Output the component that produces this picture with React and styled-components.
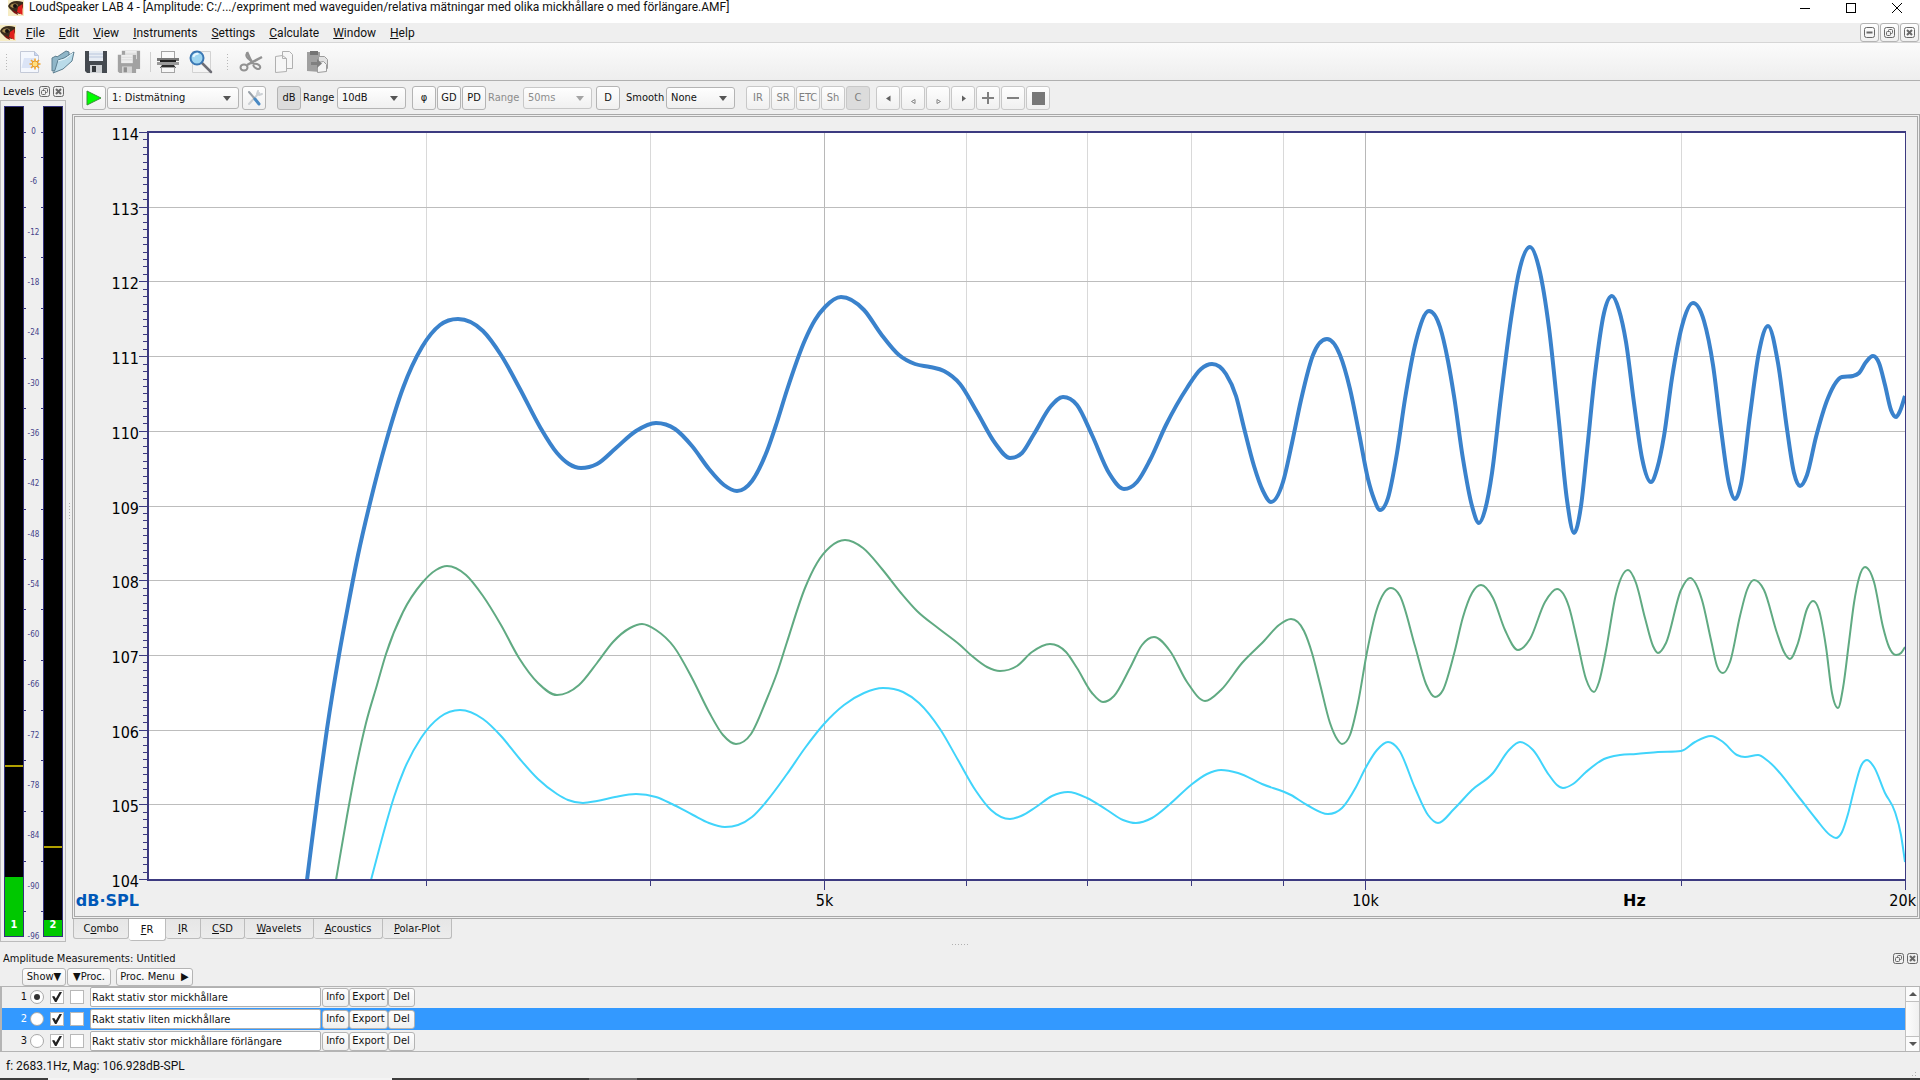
import React, { useLayoutEffect, useRef, useState } from "react";
import styled, { createGlobalStyle, css } from "styled-components";

const uiFont = '"DejaVu Sans Condensed", "DejaVu Sans", sans-serif';
const systemFont = 'Roboto, "Noto Sans", sans-serif';
const axis = "#3c3a80";

const GlobalStyle = createGlobalStyle`
  *, *::before, *::after { box-sizing: border-box; }
  body { margin: 0; background: #efefef; color: #111; font: 11px/14px ${uiFont}; overflow: hidden; }
  button, input, select { margin: 0; font: inherit; color: inherit; }
`;

/* ---------- shared parts ---------- */

const Window = styled.div`
  display: flex;
  flex-direction: column;
  height: 100vh;
  min-height: 600px;
`;

const raised = css`
  border: 1px solid #b4b4b4;
  border-radius: 3px;
  background: linear-gradient(#fefefe, #f0f0f0);
`;

const PushButton = styled.button`
  ${raised}
  display: flex;
  align-items: center;
  justify-content: center;
  flex: none;
  height: ${(p) => p.$height || 24}px;
  width: ${(p) => (p.$width ? `${p.$width}px` : "auto")};
  padding: 0;
  white-space: nowrap;
  ${(p) => p.$pressed && css`background: #dcdcdc;`}
  &:disabled { color: #808080; border-color: #c8c8c8; }
`;

const FlatButton = styled.button`
  display: flex;
  align-items: center;
  justify-content: center;
  flex: none;
  width: ${(p) => p.$width}px;
  height: ${(p) => p.$height}px;
  padding: 0;
  border: 0;
  background: none;
`;

const FrameGlyph = ({ kind, size = 11 }) => (
  <svg width={size} height={size} viewBox="0 0 11 11" fill="none" stroke="#686868">
    <rect x="0.5" y="0.5" width="10" height="10" rx="2" />
    {kind === "min" && <path d="M2.5 5.5h6" strokeWidth="2" />}
    {kind === "float" && (
      <>
        <rect x="4.5" y="2.5" width="4" height="4" rx="1" />
        <rect x="2.5" y="4.5" width="4" height="4" rx="1" fill="#efefef" />
      </>
    )}
    {kind === "close" && <path d="M3 3l5 5M8 3l-5 5" strokeWidth="2" />}
  </svg>
);

/* ---------- title bar and menu ---------- */

const TitleBar = styled.header`
  display: flex;
  align-items: center;
  flex: none;
  height: 23px;
  padding: 0 0 8px 8px;
  gap: 5px;
  background: #fff;
  font: 12px/15px ${systemFont};
`;

const Title = styled.span`
  flex: 1;
  white-space: nowrap;
`;

const WindowButtons = styled.div`
  display: flex;
`;

const MenuBar = styled.nav`
  display: flex;
  align-items: center;
  flex: none;
  height: 20px;
  font: 12px/18px ${systemFont};
  border-bottom: 1px solid #d6d6d6;
`;

const MenuItems = styled.div`
  display: flex;
  flex: 1;
  padding-left: 3px;
`;

const MenuItem = styled.button`
  padding: 0 7px;
  border: 0;
  background: none;
  line-height: 18px;
`;

const MdiButtons = styled.div`
  display: flex;
  gap: 1px;
  padding-right: 1px;
`;

const AppIcon = () => (
  <svg width="16" height="16" viewBox="0 0 16 16" aria-hidden="true">
    <rect width="16" height="16" fill="#f6ecc4" />
    <path d="M0 6C2 1 8 0 15 2L15 7L12 14L5 12L1 8Z" fill="#3a2c1c" />
    <path d="M2 6C4 3 8 3 10 5C8 8 4 9 2 6Z" fill="#a88c50" />
    <circle cx="7" cy="6" r="2" fill="#141010" />
    <path d="M10 7L14.5 4V15L9 12Z" fill="#e0201c" />
    <path d="M4 10L9 12L10 15L6 13Z" fill="#7c1410" />
  </svg>
);

const menus = ["File", "Edit", "View", "Instruments", "Settings", "Calculate", "Window", "Help"];

/* ---------- main toolbar ---------- */

const ToolBar = styled.div`
  display: flex;
  align-items: center;
  flex: none;
  height: 38px;
  gap: 9px;
  padding-left: 5px;
  background: linear-gradient(#fbfbfb, #eeeeee);
  border-bottom: 1px solid #b0b0b0;
`;

const Grip = styled.span`
  width: 4px;
  height: 18px;
  background: radial-gradient(circle, #b8b8b8 1px, transparent 1px) 0 0 / 3px 3px;
`;

const Separator = styled.span`
  width: 1px;
  height: 20px;
  margin-right: -4px;
  background: #cfcfcf;
`;

const ToolGroup = styled.div`
  display: flex;
  align-items: center;
  gap: 9px;
  margin-right: 4px;
`;

const NewIcon = () => (
  <svg width="24" height="24" viewBox="0 0 24 24">
    <path d="M2.5 1.5h14l4 4v17h-18z" fill="#f4f7fd" stroke="#c4cad8" />
    <path d="M6 8h10v10H3.5z" fill="#dbe4f6" />
    <path d="M16.5 1.5v4h4" fill="#c9d6f0" stroke="#b8c2d8" />
    <path d="M17 8.5v11M11.5 14h11M13 10l8 8M21 10l-8 8" stroke="#f0a530" strokeWidth="1.6" />
    <circle cx="17" cy="14" r="3" fill="#ffdf80" stroke="#e89a28" />
  </svg>
);
const OpenIcon = () => (
  <svg width="24" height="24" viewBox="0 0 24 24" stroke="#5d7f90" strokeLinejoin="round">
    <path d="M1 8l4-2 1 1 9-6 3 1v4L6 20l-5 1z" fill="#8fb6c8" />
    <path d="M4 20L7 10l6-2L23 2l-2 9-9 8-10 4z" fill="#b9dbe9" />
    <path d="M7 11l7-2 8-6" fill="none" stroke="#e9f6fb" />
  </svg>
);
const Floppy = ({ x = 0, y = 0, s = 1, dark }) => (
  <g transform={`translate(${x} ${y}) scale(${s})`}>
    <path d="M1 1h22v22H3l-2-2z" fill={dark ? "#454a50" : "#a2a2a2"} />
    <rect x="5" y="1" width="14" height="10" fill={dark ? "#e8edf4" : "#eeeeee"} />
    <path d="M5 4h14M5 7h14" stroke={dark ? "#b9c6dc" : "#d8d8d8"} />
    <rect x="6" y="15" width="12" height="8" fill={dark ? "#cfd2d5" : "#d4d4d4"} />
    <rect x="8" y="16" width="4" height="6" fill={dark ? "#33373b" : "#8e8e8e"} />
  </g>
);
const SaveIcon = () => <svg width="24" height="24" viewBox="0 0 24 24"><Floppy dark /></svg>;
const SaveAllIcon = () => (
  <svg width="24" height="24" viewBox="0 0 24 24">
    <Floppy x={4} y={0} s={0.83} />
    <Floppy x={0} y={4} s={0.83} />
  </svg>
);
const PrintIcon = () => (
  <svg width="24" height="24" viewBox="0 0 24 24">
    <rect x="5.5" y="1.5" width="13" height="8" fill="#fafafa" stroke="#a4a4a4" />
    <rect x="1" y="8" width="22" height="3" fill="#777" />
    <rect x="4" y="10" width="16" height="3" fill="#202020" />
    <rect x="1" y="12" width="22" height="3" fill="#9a9a9a" />
    <path d="M4 18l2-3h12l2 3z" fill="#2c2c2c" />
    <rect x="5.5" y="17.5" width="13" height="5" fill="#f6f6f6" stroke="#a4a4a4" />
  </svg>
);
const PreviewIcon = () => (
  <svg width="24" height="24" viewBox="0 0 24 24">
    <path d="M3.5 1.5h18v21h-18z" fill="#f4f4f4" stroke="#d2d2d2" />
    <path d="M13 13l9 9" stroke="#6e6e76" strokeWidth="2.5" strokeLinecap="round" />
    <circle cx="8" cy="8" r="6.5" fill="#9fd6f2" stroke="#3a77b4" strokeWidth="2" />
    <path d="M4.5 7a4 4 0 0 1 5-3" stroke="#e6f7ff" strokeWidth="2" fill="none" />
  </svg>
);
const CutIcon = () => (
  <svg width="24" height="24" viewBox="0 0 24 24" fill="none" stroke="#929292">
    <path d="M8 2c2 5 4 9 6 12M23 7L8 15" strokeWidth="2.5" />
    <path d="M8 3c-2 3 1 6 4 8" strokeWidth="2" />
    <ellipse cx="5" cy="17.5" rx="3.5" ry="3" strokeWidth="2" />
    <path d="M14 14c5-1 8 2 7 4s-5 1-7-3" strokeWidth="2" />
  </svg>
);
const CopyIcon = () => (
  <svg width="24" height="24" viewBox="0 0 24 24" fill="#f6f6f6" stroke="#b0b0b0">
    <path d="M10.5 1.5h7l3 3v14h-10z" />
    <path d="M3.5 6.5l7-1 4 3v13l-11 1z" />
    <path d="M10.5 5.5v3h4" fill="none" />
  </svg>
);
const PasteIcon = () => (
  <svg width="24" height="24" viewBox="0 0 24 24">
    <path d="M2 2h13v20l-13-1z" fill="#a0a0a0" />
    <rect x="5" y="1" width="8" height="4" fill="#747474" />
    <path d="M13.5 6.5h6l3 3v9h-9z" fill="#e2e2e2" stroke="#9c9c9c" />
    <path d="M12.5 12.5l6-1 3 3v7l-9 1z" fill="#f5f5f5" stroke="#9c9c9c" />
    <path d="M6 12h6v-3l5 4.5-5 4.5v-3H6z" fill="#808080" />
  </svg>
);

const fileTools = [["New", NewIcon], ["Open", OpenIcon], ["Save", SaveIcon], ["Save all", SaveAllIcon]];
const printTools = [["Print", PrintIcon], ["Print preview", PreviewIcon]];
const editTools = [["Cut", CutIcon], ["Copy", CopyIcon], ["Paste", PasteIcon]];

const Tools = ({ items }) =>
  items.map(([label, Icon]) => (
    <FlatButton key={label} $width={24} $height={24} aria-label={label}>
      <Icon />
    </FlatButton>
  ));

/* ---------- level meters ---------- */

const Workspace = styled.div`
  display: flex;
  flex: 1;
  min-height: 0;
`;

const LevelsDock = styled.aside`
  display: flex;
  flex-direction: column;
  width: 66px;
`;

const DockTitle = styled.div`
  display: flex;
  align-items: center;
  gap: 3px;
  flex: none;
  height: ${(p) => p.$height}px;
  padding: 2px 2px 0 3px;
`;

const DockName = styled.span`
  flex: 1;
  white-space: nowrap;
`;

const LevelsFrame = styled.div`
  display: flex;
  flex: 1;
  min-height: 0;
  padding: 5px 2px 4px 3px;
  border: 1px solid #bcbcbc;
`;

const Meter = styled.div`
  position: relative;
  display: flex;
  flex-direction: column;
  justify-content: flex-end;
  width: 20px;
  background: #000;
  border: 1px solid #34327c;
`;

const MeterFill = styled.div`
  background: #00c800;
`;

const PeakLine = styled.div`
  position: absolute;
  left: 0;
  right: 0;
  height: 2px;
  background: #b0a000;
`;

const MeterNumber = styled.span`
  position: absolute;
  left: 0;
  right: 0;
  bottom: 4px;
  text-align: center;
  font-weight: bold;
  color: #fff;
`;

const Scale = styled.div`
  display: flex;
  flex-direction: column;
  justify-content: space-between;
  width: 19px;
  padding: 26px 0 0;
  font-size: 8px;
  line-height: 10px;
  color: #45438a;
`;

const Mark = styled.div`
  display: flex;
  align-items: center;
  justify-content: space-between;
  height: 0;
  &::before, &::after {
    content: "";
    width: 2px;
    height: 1px;
    background: ${(p) => (p.$ticks ? "#34327c" : "transparent")};
  }
`;

const LevelMeter = ({ number, level, peak }) => (
  <Meter role="img" aria-label={`Channel ${number}`}>
    <MeterFill style={{ height: `${level}%` }} />
    <PeakLine style={{ bottom: `${peak}%` }} />
    <MeterNumber>{number}</MeterNumber>
  </Meter>
);

const marks = Array.from({ length: 33 }, (_, i) => -3 * i);

const Splitter = styled.div`
  display: flex;
  align-items: center;
  justify-content: center;
  flex: none;
  ${(p) => (p.$vertical ? "width: 6px;" : "height: 5px;")}
  &::after {
    content: "";
    width: ${(p) => (p.$vertical ? 1 : 17)}px;
    height: ${(p) => (p.$vertical ? 17 : 1)}px;
    background: repeating-linear-gradient(${(p) => (p.$vertical ? "180deg" : "90deg")}, #b0b0b0 0 1px, transparent 1px 3px);
  }
`;

/* ---------- measurement toolbar ---------- */

const View = styled.main`
  display: flex;
  flex-direction: column;
  flex: 1;
  min-width: 0;
`;

const Controls = styled.div`
  display: flex;
  align-items: center;
  flex: none;
  height: 33px;
  padding: 1px 0 0 10px;
`;

const ButtonRun = styled.div`
  display: flex;
  align-items: center;
  gap: 1px;
  margin-right: ${(p) => p.$after || 0}px;
`;

const FieldLabel = styled.label`
  width: ${(p) => p.$width}px;
  padding-left: 2px;
  white-space: nowrap;
  color: ${(p) => (p.$dim ? "#8c8c8c" : "#111")};
`;

const Combo = styled.span`
  ${raised}
  display: flex;
  align-items: center;
  width: ${(p) => p.$width}px;
  height: 22px;
  margin-right: ${(p) => p.$after || 0}px;
  padding-right: 7px;
  color: ${(p) => (p.$dim ? "#8c8c8c" : "#111")};
  ${(p) => p.$dim && css`border-color: #c8c8c8;`}
`;

const ComboSelect = styled.select`
  appearance: none;
  flex: 1;
  min-width: 0;
  height: 20px;
  padding: 0 0 0 4px;
  border: 0;
  background: none;
  opacity: 1;
`;

const Choice = ({ id, width, after, dim, value, label }) => (
  <Combo $width={width} $after={after} $dim={dim}>
    <ComboSelect id={id} disabled={dim} aria-label={label} defaultValue={value}>
      <option>{value}</option>
    </ComboSelect>
    <svg width="8" height="5" viewBox="0 0 8 5" aria-hidden="true">
      <path d="M0 0h8L4 5z" fill={dim ? "#a4a4a4" : "#555"} />
    </svg>
  </Combo>
);

const transport = [
  ["Back", "M4 7.5L8.5 4.5v6z", true],
  ["Step back", "M4.5 10.5L8 8.5v4z", false],
  ["Step forward", "M8.5 10.5L5 8.5v4z", false],
  ["Forward", "M9 7.5L5 4.5v6z", true],
];

/* ---------- response chart ---------- */

const ChartFrame = styled.div`
  flex: 1;
  min-height: 0;
  border: 3px double #a8a8a8;
  overflow: hidden;
`;

const ChartSvg = styled.svg`
  display: block;
  font-family: ${uiFont};
  font-size: 16px;
`;

const UnitLabel = styled.text`
  font-family: "DejaVu Sans", sans-serif;
  font-weight: bold;
`;

const SPAN_X = 1757;
const SPAN_Y = 748;

const stand = [
  [159,748],[171,654],[179,597],[191,523],[200,474],[210,423],[222,371],[238,310],[255,256],[274,215],[292,193],[310,187],[335,199],[353,223],[372,257],[392,295],[409,321],[421,332],[433,336],[449,332],[468,316],[488,299],[508,291],[527,297],[544,314],[561,337],[576,353],[589,359],[604,349],[619,319],[629,290],[639,258],[657,208],[667,188],[677,175],[693,165],[716,178],[733,202],[751,223],[767,232],[782,235],[796,239],[812,252],[829,280],[847,311],[862,326],[874,321],[886,302],[903,274],[915,265],[929,273],[944,303],[961,341],[976,357],[989,350],[1002,328],[1018,293],[1039,256],[1053,237],[1064,232],[1078,242],[1088,264],[1096,296],[1106,334],[1115,359],[1123,370],[1135,350],[1144,311],[1153,268],[1165,223],[1179,207],[1192,223],[1202,257],[1211,301],[1220,347],[1226,367],[1232,378],[1240,366],[1249,321],[1257,267],[1268,209],[1281,179],[1292,195],[1300,229],[1306,264],[1315,327],[1324,374],[1331,391],[1337,378],[1344,341],[1352,273],[1363,187],[1371,140],[1382,115],[1391,136],[1401,196],[1411,290],[1419,368],[1426,401],[1433,374],[1439,319],[1447,242],[1456,181],[1464,164],[1471,178],[1478,210],[1486,271],[1494,326],[1503,350],[1509,337],[1516,304],[1524,246],[1534,194],[1545,171],[1556,189],[1565,233],[1573,297],[1581,352],[1587,367],[1593,352],[1602,283],[1611,220],[1620,194],[1630,231],[1639,297],[1646,341],[1652,354],[1659,343],[1668,305],[1680,266],[1694,245],[1705,244],[1711,241],[1718,230],[1725,224],[1731,231],[1737,253],[1743,278],[1748,285],[1752,279],[1757,264],
];
const smallClip = [
  [188,748],[199,684],[208,636],[218,591],[229,553],[238,522],[255,480],[274,451],[288,438],[299,434],[318,443],[335,464],[353,493],[371,526],[390,551],[409,563],[431,553],[449,531],[465,510],[482,496],[494,492],[508,498],[526,515],[544,546],[561,580],[575,603],[588,612],[603,602],[618,569],[629,541],[639,510],[657,456],[669,431],[682,415],[697,408],[715,416],[734,437],[753,461],[769,479],[790,496],[812,513],[824,524],[839,535],[852,539],[869,534],[884,520],[902,512],[918,520],[929,536],[944,561],[955,570],[966,564],[982,536],[994,513],[1006,505],[1022,519],[1039,550],[1057,569],[1073,558],[1094,531],[1116,509],[1131,493],[1143,487],[1156,499],[1164,521],[1172,552],[1182,591],[1189,607],[1194,612],[1202,603],[1210,571],[1219,520],[1228,480],[1236,461],[1243,456],[1252,464],[1267,514],[1278,552],[1287,565],[1295,558],[1306,522],[1315,485],[1324,461],[1333,453],[1345,466],[1357,498],[1370,518],[1382,507],[1397,470],[1409,457],[1421,475],[1429,508],[1438,547],[1446,560],[1451,550],[1458,518],[1468,462],[1480,438],[1488,451],[1497,486],[1505,514],[1510,521],[1518,511],[1533,458],[1542,446],[1554,468],[1563,508],[1569,534],[1575,541],[1582,530],[1592,484],[1599,458],[1606,448],[1616,458],[1629,501],[1636,520],[1642,527],[1650,511],[1659,477],[1665,469],[1671,478],[1678,515],[1684,561],[1690,576],[1695,556],[1701,510],[1706,471],[1711,446],[1717,435],[1726,450],[1735,495],[1741,515],[1748,523],[1753,521],[1757,515],
];
const extended = [
  [223,748],[238,692],[246,665],[256,638],[273,606],[292,585],[312,578],[335,587],[353,604],[371,626],[390,647],[409,662],[420,668],[435,671],[449,669],[467,665],[488,662],[508,665],[524,672],[545,683],[561,691],[577,695],[590,693],[604,685],[618,670],[639,642],[657,616],[676,592],[696,573],[716,561],[735,556],[755,560],[771,571],[792,597],[810,628],[828,659],[843,678],[862,687],[873,684],[888,675],[904,664],[920,660],[939,666],[959,678],[975,688],[988,691],[1004,686],[1022,672],[1043,653],[1059,642],[1073,638],[1090,641],[1114,652],[1143,663],[1159,673],[1180,682],[1194,676],[1208,655],[1217,637],[1229,618],[1240,610],[1251,618],[1267,656],[1280,683],[1290,691],[1306,677],[1324,658],[1345,641],[1361,618],[1372,610],[1385,618],[1401,643],[1409,653],[1415,656],[1425,652],[1438,640],[1456,627],[1472,623],[1488,622],[1510,620],[1533,619],[1547,610],[1563,604],[1575,610],[1589,623],[1597,625],[1610,623],[1620,629],[1650,664],[1668,687],[1682,703],[1688,706],[1694,700],[1700,682],[1706,658],[1713,634],[1719,628],[1726,635],[1737,661],[1747,680],[1753,703],[1757,730],
];

const curves = [
  { points: extended, color: "#40d4fb", width: 2 },
  { points: smallClip, color: "#60aa82", width: 2 },
  { points: stand, color: "#3a82cc", width: 4 },
];

/* Cubic through the points, level at every peak and dip so they keep their height. */
function smoothPath(points, sx, sy) {
  const p = points.map(([x, y]) => [x * sx, y * sy]);
  const step = p.slice(1).map((q, i) => q[0] - p[i][0]);
  const slope = p.slice(1).map((q, i) => (q[1] - p[i][1]) / step[i]);
  const tangent = p.map((_, i) => {
    if (i === 0) return slope[0];
    if (i === p.length - 1) return slope[i - 1];
    const a = slope[i - 1];
    const b = slope[i];
    if (a * b <= 0) return 0;
    const mean = (a * step[i] + b * step[i - 1]) / (step[i] + step[i - 1]);
    return Math.sign(mean) * Math.min(Math.abs(mean), 3 * Math.abs(a), 3 * Math.abs(b));
  });
  let path = `M${p[0][0]} ${p[0][1]}`;
  for (let i = 1; i < p.length; i++) {
    const [x0, y0] = p[i - 1];
    const [x1, y1] = p[i];
    const h = step[i - 1] / 3;
    path += `C${x0 + h} ${y0 + tangent[i - 1] * h} ${x1 - h} ${y1 - tangent[i] * h} ${x1} ${y1}`;
  }
  return path;
}

const snap = (v) => Math.round(v) + 0.5;
const margin = { left: 73, top: 15, right: 12, bottom: 36 };

function ResponseChart() {
  const frame = useRef(null);
  const [size, setSize] = useState({ width: 1200, height: 600 });

  useLayoutEffect(() => {
    const measure = () =>
      setSize({ width: frame.current.clientWidth, height: frame.current.clientHeight });
    measure();
    const observer = new ResizeObserver(measure);
    observer.observe(frame.current);
    return () => observer.disconnect();
  }, []);

  const w = size.width - margin.left - margin.right;
  const h = size.height - margin.top - margin.bottom;
  const fx = (f) => snap((Math.log(f / 2100) / Math.log(20000 / 2100)) * w);
  const fy = (db) => snap(((114 - db) / 10) * (h - 1));
  const freqs = [3, 4, 5, 6, 7, 8, 9, 10, 15, 20];
  const major = (k) => k % 5 === 0 && k !== 15;

  return (
    <ChartFrame ref={frame}>
      <ChartSvg width={size.width} height={size.height} role="img" aria-label="Frequency response">
        <defs>
          <clipPath id="plot-area"><rect width={w} height={h} /></clipPath>
        </defs>
        <g transform={`translate(${margin.left} ${margin.top})`}>
          <rect width={w} height={h} fill="#fff" />
          {freqs.map((k) => (
            <g key={k}>
              <path d={`M${fx(k * 1000)} 0V${h}`} stroke={major(k) ? "#b8b8b8" : "#d9d9d9"} />
              <path d={`M${fx(k * 1000)} ${h}v${major(k) ? 10 : 6}`} stroke={axis} />
              {major(k) && k < 20 && (
                <text x={fx(k * 1000)} y={h + 26} textAnchor="middle">{k}k</text>
              )}
            </g>
          ))}
          <text x={w + margin.right - 1} y={h + 26} textAnchor="end">20k</text>
          {Array.from({ length: 11 }, (_, i) => 114 - i).map((db) => (
            <g key={db}>
              <path d={`M0 ${fy(db)}H${w}`} stroke="#bdbdbd" />
              <text x="-9" y={fy(db) + 7} textAnchor="end">{db}</text>
            </g>
          ))}
          {Array.from({ length: 101 }, (_, i) => (
            <path key={i} d={`M${i % 10 ? -5 : -9} ${fy(114 - i / 10)}H0`} stroke={axis} />
          ))}
          <g clipPath="url(#plot-area)" fill="none">
            {curves.map((c) => (
              <path key={c.color} d={smoothPath(c.points, w / SPAN_X, h / SPAN_Y)} stroke={c.color} strokeWidth={c.width} />
            ))}
          </g>
          <path d={`M0 0H${w + 1}M0 ${h}H${w + 1}M0 -1V${h + 1}`} stroke={axis} strokeWidth="2" />
          <path d={`M${w + 0.5} 0V${h}`} stroke={axis} />
          <UnitLabel x="-9" y={h + 26} textAnchor="end" fill="#0058b8">dB·SPL</UnitLabel>
          <UnitLabel x={w * 0.846} y={h + 26} textAnchor="middle">Hz</UnitLabel>
        </g>
      </ChartSvg>
    </ChartFrame>
  );
}

/* ---------- view tabs ---------- */

const TabBar = styled.div`
  display: flex;
  flex: none;
  height: 23px;
  padding-left: 1px;
`;

const Tab = styled.button`
  width: ${(p) => p.$width}px;
  height: ${(p) => (p.$active ? 22 : 20)}px;
  padding: 0;
  border: 1px solid #bcbcbc;
  border-top: 0;
  border-left-width: ${(p) => (p.$first ? 1 : 0)}px;
  border-radius: 0 0 3px 3px;
  background: ${(p) => (p.$active ? "#fff" : "linear-gradient(#e6e6e6, #ececec)")};
`;

const tabs = [
  ["Combo", 1, 56], ["FR", 0, 37], ["IR", 0, 35], ["CSD", 0, 44],
  ["Wavelets", 0, 69], ["Acoustics", 0, 69], ["Polar-Plot", 0, 69],
];

const Mnemonic = ({ text, at = 0 }) => (
  <>
    {text.slice(0, at)}
    <u>{text[at]}</u>
    {text.slice(at + 1)}
  </>
);

/* ---------- measurements dock ---------- */

const HeaderRow = styled.div`
  display: flex;
  flex: none;
  gap: 1px;
  height: 18px;
  padding-left: 22px;
`;

const Gap = styled.span`
  width: 3px;
`;

const ListFrame = styled.div`
  display: flex;
  flex: none;
  height: 66px;
  border: 1px solid #b4b4b4;
  border-width: 1px 0 1px 2px;
  overflow: hidden;
`;

const Rows = styled.div`
  display: flex;
  flex-direction: column;
  justify-content: center;
  flex: 1;
`;

const Row = styled.div`
  display: flex;
  align-items: center;
  flex: none;
  height: 22px;
  padding-left: 16px;
  background: ${(p) => (p.$selected ? "#3399ff" : "transparent")};
`;

const RowNumber = styled.span`
  width: 9px;
  text-align: right;
  margin-right: 3px;
  color: ${(p) => (p.$selected ? "#fff" : "#111")};
`;

const Radio = styled.input`
  appearance: none;
  display: grid;
  place-items: center;
  width: 14px;
  height: 14px;
  margin-right: 6px;
  border: 1px solid #a8a8a8;
  border-radius: 50%;
  background: #fff;
  &:checked::before {
    content: "";
    width: 6px;
    height: 6px;
    border-radius: 50%;
    background: #333;
  }
`;

const Check = styled.input`
  appearance: none;
  display: grid;
  place-items: center;
  width: 14px;
  height: 14px;
  margin-right: 6px;
  border: 1px solid #b8b8b8;
  background: #fff;
  &:checked::before {
    content: "";
    width: 10px;
    height: 10px;
    background: #222;
    clip-path: polygon(0 45%, 22% 40%, 38% 65%, 75% 0, 100% 0, 45% 100%, 30% 100%);
  }
`;

const NameField = styled.input`
  width: 231px;
  height: 20px;
  margin-right: 1px;
  padding: 0 1px;
  border: 1px solid #b0b0b0;
  border-radius: 2px;
  background: #fff;
`;

const ScrollBar = styled.div`
  display: flex;
  flex-direction: column;
  width: 15px;
`;

const ScrollThumb = styled.div`
  flex: 1;
  border: 1px solid #c0c0c0;
  background: linear-gradient(90deg, #fdfdfd, #f0f0f0);
`;

const ScrollArrow = styled.button`
  display: flex;
  align-items: center;
  justify-content: center;
  height: 14px;
  padding: 0;
  border: 1px solid #c0c0c0;
  border-width: 0 1px;
  background: #fbfbfb;
`;

const StatusBar = styled.footer`
  display: flex;
  align-items: center;
  justify-content: space-between;
  flex: none;
  height: 26px;
  padding: 2px 2px 0 6px;
  font: 12px/16px ${systemFont};
`;

const SizeGrip = styled.span`
  align-self: flex-end;
  width: 10px;
  height: 10px;
  background: radial-gradient(circle, #b0b0b0 1px, transparent 1px) 0 0 / 3px 3px;
  clip-path: polygon(100% 0, 100% 100%, 0 100%);
`;

const TaskEdge = styled.div`
  flex: none;
  height: 2px;
  background: linear-gradient(90deg, #3c3c3c 48px, #f4f4f4 48px 392px, #3c3c3c 392px 589px, #6c6c6c 589px 637px, #3c3c3c 637px);
`;

const measurements = [
  { name: "Rakt stativ stor mickhållare", active: true },
  { name: "Rakt stativ liten mickhållare", selected: true },
  { name: "Rakt stativ stor mickhållare förlängare" },
];

export default function App() {
  return (
    <Window>
      <GlobalStyle />
      <TitleBar>
        <AppIcon />
        <Title>LoudSpeaker LAB 4 - [Amplitude: C:/.../expriment med waveguiden/relativa mätningar med olika mickhållare o med förlängare.AMF]</Title>
        <WindowButtons>
          <FlatButton $width={46} $height={15} aria-label="Minimize">
            <svg width="10" height="10" stroke="#000"><path d="M0 5.5h10" /></svg>
          </FlatButton>
          <FlatButton $width={46} $height={15} aria-label="Maximize">
            <svg width="10" height="10" stroke="#000" fill="none"><rect x="0.5" y="0.5" width="9" height="9" /></svg>
          </FlatButton>
          <FlatButton $width={46} $height={15} aria-label="Close">
            <svg width="10" height="10" stroke="#000"><path d="M0 0l10 10M10 0L0 10" /></svg>
          </FlatButton>
        </WindowButtons>
      </TitleBar>

      <MenuBar>
        <AppIcon />
        <MenuItems>
          {menus.map((m) => <MenuItem key={m}><Mnemonic text={m} /></MenuItem>)}
        </MenuItems>
        <MdiButtons>
          {["min", "float", "close"].map((k) => (
            <PushButton key={k} $width={19} $height={19} aria-label={k}><FrameGlyph kind={k} /></PushButton>
          ))}
        </MdiButtons>
      </MenuBar>

      <ToolBar>
        <Grip />
        <ToolGroup>
          <Tools items={fileTools} />
          <Separator />
          <Tools items={printTools} />
        </ToolGroup>
        <Grip />
        <Tools items={editTools} />
      </ToolBar>

      <Workspace>
        <LevelsDock>
          <DockTitle $height={19}>
            <DockName>Levels</DockName>
            <FlatButton $width={11} $height={11} aria-label="Float"><FrameGlyph kind="float" /></FlatButton>
            <FlatButton $width={11} $height={11} aria-label="Close"><FrameGlyph kind="close" /></FlatButton>
          </DockTitle>
          <LevelsFrame>
            <LevelMeter number={1} level={7.1} peak={20.4} />
            <Scale>
              {marks.map((m) => (
                <Mark key={m} $ticks={m === 0 || m % 6 !== 0}>{m % 6 === 0 && <span>{m}</span>}</Mark>
              ))}
            </Scale>
            <LevelMeter number={2} level={1.9} peak={10.6} />
          </LevelsFrame>
        </LevelsDock>
        <Splitter $vertical />
        <View>
          <Controls>
            <ButtonRun $after={1}>
              <PushButton $width={24} aria-label="Run">
                <svg width="16" height="16"><path d="M1 1l14 7-14 7z" fill="#0f0" stroke="#3c8c3c" /></svg>
              </PushButton>
            </ButtonRun>
            <Choice width={132} after={3} value="1: Distmätning" label="Measurement setup" />
            <ButtonRun $after={11}>
              <PushButton $width={24} aria-label="Setup">
                <svg width="18" height="18" fill="none" strokeLinecap="round">
                  <path d="M4 15L14 4" stroke="#ccd0d4" strokeWidth="2" />
                  <path d="M12 5l1-3M14 6l3-1" stroke="#ccd0d4" strokeWidth="2" />
                  <path d="M4 3l6 7" stroke="#98a0a8" strokeWidth="2" />
                  <path d="M10 10l4 5" stroke="#4a8ac4" strokeWidth="3" />
                </svg>
              </PushButton>
            </ButtonRun>
            <PushButton $width={24} $pressed>dB</PushButton>
            <FieldLabel $width={36} htmlFor="db-range">Range</FieldLabel>
            <Choice id="db-range" width={69} after={6} value="10dB" />
            <ButtonRun>
              <PushButton $width={24}>φ</PushButton>
              <PushButton $width={24}>GD</PushButton>
              <PushButton $width={24}>PD</PushButton>
            </ButtonRun>
            <FieldLabel $width={37} $dim htmlFor="time-range">Range</FieldLabel>
            <Choice id="time-range" width={69} after={4} dim value="50ms" />
            <ButtonRun $after={4}><PushButton $width={24}>D</PushButton></ButtonRun>
            <FieldLabel $width={42} htmlFor="smooth">Smooth</FieldLabel>
            <Choice id="smooth" width={69} after={11} value="None" />
            <ButtonRun $after={6}>
              {["IR", "SR", "ETC", "Sh", "C"].map((t) => (
                <PushButton key={t} $width={24} disabled $pressed={t === "C"}>{t}</PushButton>
              ))}
            </ButtonRun>
            <ButtonRun>
              {transport.map(([label, d, solid]) => (
                <PushButton key={label} $width={24} disabled aria-label={label}>
                  <svg width="13" height="15"><path d={d} fill={solid ? "#606060" : "#fff"} stroke={solid ? "none" : "#808080"} /></svg>
                </PushButton>
              ))}
              <PushButton $width={24} disabled aria-label="Zoom in">
                <svg width="12" height="12"><path d="M6 0v12M0 6h12" stroke="#808080" strokeWidth="2" /></svg>
              </PushButton>
              <PushButton $width={24} disabled aria-label="Zoom out">
                <svg width="12" height="12"><path d="M0 6h12" stroke="#808080" strokeWidth="2" /></svg>
              </PushButton>
              <PushButton $width={24} disabled aria-label="Stop">
                <svg width="13" height="13"><rect width="13" height="13" fill="#787878" /></svg>
              </PushButton>
            </ButtonRun>
          </Controls>
          <ResponseChart />
          <TabBar>
            {tabs.map(([name, at, width], i) => (
              <Tab key={name} $width={width} $first={i === 0} $active={name === "FR"}>
                <Mnemonic text={name} at={at} />
              </Tab>
            ))}
          </TabBar>
        </View>
      </Workspace>
      <Splitter />

      <DockTitle $height={21}>
        <DockName>Amplitude Measurements: Untitled</DockName>
        <FlatButton $width={11} $height={11} aria-label="Float"><FrameGlyph kind="float" /></FlatButton>
        <FlatButton $width={11} $height={11} aria-label="Close"><FrameGlyph kind="close" /></FlatButton>
      </DockTitle>
      <HeaderRow>
        <PushButton $height={18} $width={44}>Show▼</PushButton>
        <PushButton $height={18} $width={44}>▼Proc.</PushButton>
        <Gap />
        <PushButton $height={18} $width={77}>Proc. Menu&nbsp; ▶</PushButton>
      </HeaderRow>
      <ListFrame>
        <Rows>
          {measurements.map((m, i) => (
            <Row key={m.name} $selected={m.selected}>
              <RowNumber $selected={m.selected}>{i + 1}</RowNumber>
              <Radio type="radio" name="active" defaultChecked={m.active} aria-label={`Activate ${m.name}`} />
              <Check type="checkbox" defaultChecked aria-label={`Show ${m.name}`} />
              <Check type="checkbox" aria-label={`Process ${m.name}`} />
              <NameField defaultValue={m.name} aria-label="Name" />
              <PushButton $height={19} $width={27}>Info</PushButton>
              <PushButton $height={19} $width={39}>Export</PushButton>
              <PushButton $height={19} $width={27}>Del</PushButton>
            </Row>
          ))}
        </Rows>
        <ScrollBar>
          <ScrollArrow aria-label="Scroll up"><svg width="8" height="4"><path d="M0 4h8L4 0z" fill="#555" /></svg></ScrollArrow>
          <ScrollThumb />
          <ScrollArrow aria-label="Scroll down"><svg width="8" height="4"><path d="M0 0h8L4 4z" fill="#555" /></svg></ScrollArrow>
        </ScrollBar>
      </ListFrame>
      <StatusBar>
        <span>f: 2683.1Hz, Mag: 106.928dB-SPL</span>
        <SizeGrip />
      </StatusBar>
      <TaskEdge />
    </Window>
  );
}
